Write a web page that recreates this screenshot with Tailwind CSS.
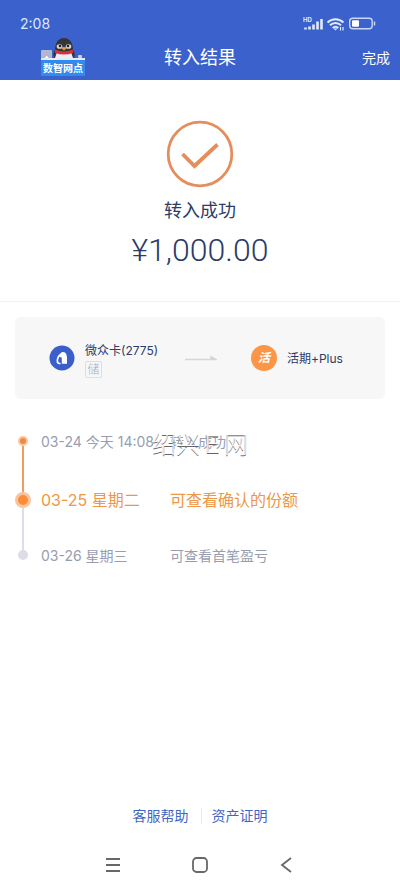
<!DOCTYPE html>
<html lang="zh-CN">
<head>
    <meta charset="UTF-8">
    <meta name="viewport" content="width=device-width, initial-scale=1.0">
    <title>转入结果</title>
    <script src="https://cdn.jsdelivr.net/npm/@tailwindcss/browser@4"></script>
</head>
<body class="bg-white min-h-screen flex flex-col font-[Inter,'Noto_Sans_CJK_SC',sans-serif] text-[#2c3b68]">
    <header class="bg-[#3b61cd] text-white h-20">
        <!-- status bar -->
        <div class="flex items-center justify-between pt-3 pl-5 pr-6 h-9">
            <span class="text-sm text-[#dfe7fb]">2:08</span>
            <svg class="w-[73px] h-4" viewBox="0 0 73 16" fill="none">
                <text x="0" y="6" font-size="6" font-weight="700" fill="#e3eafc">HD</text>
                <path d="M2.500 13.500v-2M6.500 13.500v-3M10.500 13.500v-5M14.500 13.500v-8M18.500 13.500v-10.500" stroke="#e3eafc" stroke-width="2.600"/>
                <path d="M24.500 6.500c4.500-4.300 11.500-4.300 16 0M27 9.300c3.200-3 7.800-3 11 0M29.700 12c1.800-1.600 3.800-1.600 5.600 0" stroke="#e3eafc" stroke-width="2"/>
                <path d="M30.500 12.500h4l-2 2z" fill="#e3eafc"/>
                <path d="M37.500 11v3.500M40 14.500V11" stroke="#e3eafc" stroke-width="1.200"/>
                <rect x="46.700" y="2.200" width="22.500" height="10.500" rx="3" stroke="#c9d6f8" stroke-width="1.400"/>
                <rect x="49" y="4.200" width="7" height="6.500" rx="1" fill="#fff"/>
                <path d="M71.500 5.500v4" stroke="#c9d6f8" stroke-width="1.500"/>
            </svg>
        </div>
        <!-- title bar -->
        <div class="grid grid-cols-3 items-center h-11">
            <a href="#" aria-label="数智网点" class="ml-10 justify-self-start">
                <svg class="w-[46px] h-10" viewBox="0 0 46 40">
                    <path d="M14 20c-1-3-1-6 1-8c0-7 3-12 9-12s9 5 9 12c2 2 2 5 1 8z" fill="#34363c"/>
                    <path d="M17 14h14l2 6H15z" fill="#e9edf5"/>
                    <ellipse cx="19.500" cy="8.500" rx="2.800" ry="2.300" fill="#d9d7cf"/>
                    <ellipse cx="28.500" cy="8.500" rx="2.800" ry="2.300" fill="#d9d7cf"/>
                    <circle cx="20" cy="8" r="1.300" fill="#222"/>
                    <circle cx="28" cy="8" r="1.300" fill="#222"/>
                    <path d="M21 10q3-2 6 0l-3 2.500z" fill="#e8a33c"/>
                    <path d="M15 11.500q9 4 18 0v3.500q-9 3-18 0z" fill="#d9303e"/>
                    <rect x="1" y="12" width="11" height="8" rx="1" fill="#aab9d8"/>
                    <circle cx="6.500" cy="16" r="2" fill="#d8a9ae"/>
                    <path d="M5 20q1.500-4 3.500 0z" fill="#fff"/>
                    <rect x="38" y="17" width="4" height="3" rx="1" fill="#c9d3ee"/>
                    <rect x="1" y="20" width="44" height="18" fill="#318af0"/>
                    <rect x="1" y="20" width="44" height="2" fill="#e4ecfa"/>
                    <text x="23" y="34" text-anchor="middle" font-size="10" font-weight="700" fill="#fff">数智网点</text>
                </svg>
            </a>
            <h1 class="text-lg text-center">转入结果</h1>
            <button type="button" class="justify-self-end pr-[10px] text-sm">完成</button>
        </div>
    </header>

    <main class="flex-1">
        <section class="flex flex-col items-center pt-10 h-[222px] border-b border-[#f3f3f5]">
            <svg class="w-[68px] h-[68px]" viewBox="0 0 68 68" fill="none" stroke="#e58e5c">
                <circle cx="34" cy="34" r="31.800" stroke-width="2.800"/>
                <path d="M16.500 34L28.500 46L51.500 24.500" stroke-width="3.800"/>
            </svg>
            <p class="mt-2 text-lg leading-[30px]">转入成功</p>
            <p class="text-[32px] leading-[48px] font-light font-[Roboto,sans-serif]">¥1,000.00</p>
        </section>

        <section class="flex items-center mx-[15px] mt-[15px] h-[82px] pl-[34px] rounded-md bg-[#f7f7f7] text-xs">
            <div class="flex items-center gap-[10px] w-[136px]">
                <svg class="w-[26px] h-[26px] shrink-0" viewBox="0 0 26 26">
                    <circle cx="13" cy="13" r="12.500" fill="#3c5ecb"/>
                    <path d="M12.800 18.800V12.500L10.500 12C10.500 9 12 7 14 7C17 7 18 10 18 13V18.800z" fill="#fff"/>
                    <path d="M12 9C9 11 8 14 8.500 17.500L10 18.500H11.500" fill="none" stroke="#fff" stroke-width="1.600"/>
                </svg>
                <div class="pt-1">
                    <p class="leading-4 whitespace-nowrap">微众卡(2775)</p>
                    <span class="block mt-[2px] w-[17px] h-[17px] border border-[#dcdee8] rounded-xs leading-[15px] text-center font-light text-[#a5abc4]">储</span>
                </div>
            </div>
            <svg class="w-8 h-2 shrink-0" viewBox="0 0 32 8"><path d="M0 5.500h31l-5-3v3" fill="#d6d6d8" stroke="#d6d6d8" stroke-width="1.500"/></svg>
            <div class="flex items-center gap-[10px] ml-[34px]">
                <span class="flex items-center justify-center w-[26px] h-[26px] rounded-full bg-[#fb9649] text-white font-bold italic">活</span>
                <p class="pt-[2px]">活期+Plus</p>
            </div>
        </section>

        <section class="relative pt-7 pl-[15px]">
            <ol class="text-sm text-[#989daf]">
                <li class="flex h-[59px]">
                    <div class="flex flex-col items-center w-4 mr-[10px]">
                        <span class="w-[10px] h-[10px] mt-[9px] rounded-full border-2 border-[#fbc49c] bg-[#ee8a45]"></span>
                        <span class="w-[2px] flex-1 bg-[#ee9d5d]"></span>
                    </div>
                    <span class="w-[129px] leading-[30px]">03-24 今天 14:08</span>
                    <span class="leading-[30px]">转入成功</span>
                </li>
                <li class="flex h-[55px] text-base text-[#ee9745]">
                    <div class="flex flex-col items-center w-4 mr-[10px]">
                        <span class="w-[2px] h-[6px] bg-[#ee9d5d]"></span>
                        <span class="w-4 h-4 rounded-full border-3 border-[#fbc49c] bg-[#fa8c3a]"></span>
                        <span class="w-[2px] flex-1 bg-[#dddde5]"></span>
                    </div>
                    <span class="w-[129px] leading-7">03-25 星期二</span>
                    <span class="leading-7">可查看确认的份额</span>
                </li>
                <li class="flex">
                    <div class="flex flex-col items-center w-4 mr-[10px]">
                        <span class="w-[2px] h-[9px] bg-[#dddde5]"></span>
                        <span class="w-[10px] h-[10px] rounded-full bg-[#dddde5]"></span>
                    </div>
                    <span class="w-[129px] leading-[30px]">03-26 星期三</span>
                    <span class="leading-[30px]">可查看首笔盈亏</span>
                </li>
            </ol>
            <span class="absolute left-[152px] top-8 text-2xl leading-7 font-light text-white/90 [text-shadow:0_1px_0_#666]">绍兴Ｅ网</span>
        </section>
    </main>

    <footer>
        <div class="flex items-center justify-center text-sm text-[#3f66c4]">
            <a href="#" class="pr-3 leading-4">客服帮助</a>
            <a href="#" class="pl-[10px] leading-4 border-l border-[#e9ebf2]">资产证明</a>
        </div>
        <nav class="flex justify-between px-[105px] pt-[33px] pb-4">
            <button type="button" aria-label="菜单">
                <svg class="w-4 h-4" viewBox="0 0 16 16" stroke="#66686b" stroke-width="1.800"><path d="M1 2h14M1 8h14M1 14h14"/></svg>
            </button>
            <button type="button" aria-label="主页">
                <svg class="w-4 h-4" viewBox="0 0 16 16" fill="none" stroke="#66686b" stroke-width="1.800"><rect x="1" y="1" width="14" height="14" rx="3.500"/></svg>
            </button>
            <button type="button" aria-label="返回">
                <svg class="w-4 h-4" viewBox="0 0 16 16" fill="none" stroke="#66686b" stroke-width="1.800"><path d="M12 1L3 8l9 7"/></svg>
            </button>
        </nav>
    </footer>
</body>
</html>
